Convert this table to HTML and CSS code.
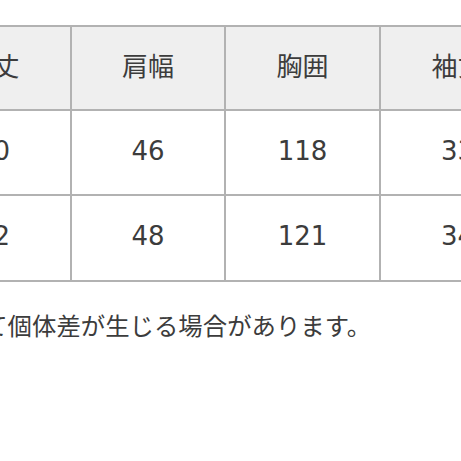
FILE: index.html
```html
<!DOCTYPE html>
<html lang="ja">
<head>
<meta charset="utf-8">
<link rel="stylesheet" href="styles.css">
</head>
<body>
<div class="page">
  <table class="size-table">
    <colgroup>
      <col class="c1"><col class="c2"><col class="c3"><col class="c4">
    </colgroup>
    <thead>
      <tr class="head">
        <th>着丈</th><th>肩幅</th><th>胸囲</th><th>袖丈</th>
      </tr>
    </thead>
    <tbody>
      <tr class="r1">
        <td>70</td><td>46</td><td>118</td><td>33</td>
      </tr>
      <tr class="r2">
        <td>72</td><td>48</td><td>121</td><td>34</td>
      </tr>
    </tbody>
  </table>
  <p class="note">によって個体差が生じる場合があります。</p>
</div>
</body>
</html>
```
FILE: styles.css
```css
html, body {
  margin: 0;
  padding: 0;
  background: #ffffff;
  overflow: hidden;
}
.page {
  width: 461px;
  height: 461px;
  overflow: hidden;
  padding-top: 25px;
  box-sizing: border-box;
  font-family: "DejaVu Sans", "Noto Sans CJK JP", sans-serif;
  color: #3c3c3c;
}
.size-table {
  margin-left: -85px;
  border-collapse: collapse;
  table-layout: fixed;
  width: 619px;
}
.c1 { width: 155px; }
.c2 { width: 154px; }
.c3 { width: 155px; }
.c4 { width: 155px; }
.size-table th,
.size-table td {
  border: 2px solid #b2b2b2;
  text-align: center;
  vertical-align: middle;
  padding: 0 0 4px 0;
  font-size: 26px;
  font-weight: normal;
}
.size-table th {
  background: #efefef;
  font-family: "Noto Sans CJK JP", sans-serif;
  padding-bottom: 8px;
}
.head { height: 84px; }
.r1 { height: 85px; }
.r2 { height: 86px; }
.note {
  margin: 26px 0 0 -88px;
  font-family: "Noto Sans CJK JP", sans-serif;
  font-size: 24.4px;
  line-height: 34px;
  color: #3c3c3c;
  white-space: nowrap;
}
```
